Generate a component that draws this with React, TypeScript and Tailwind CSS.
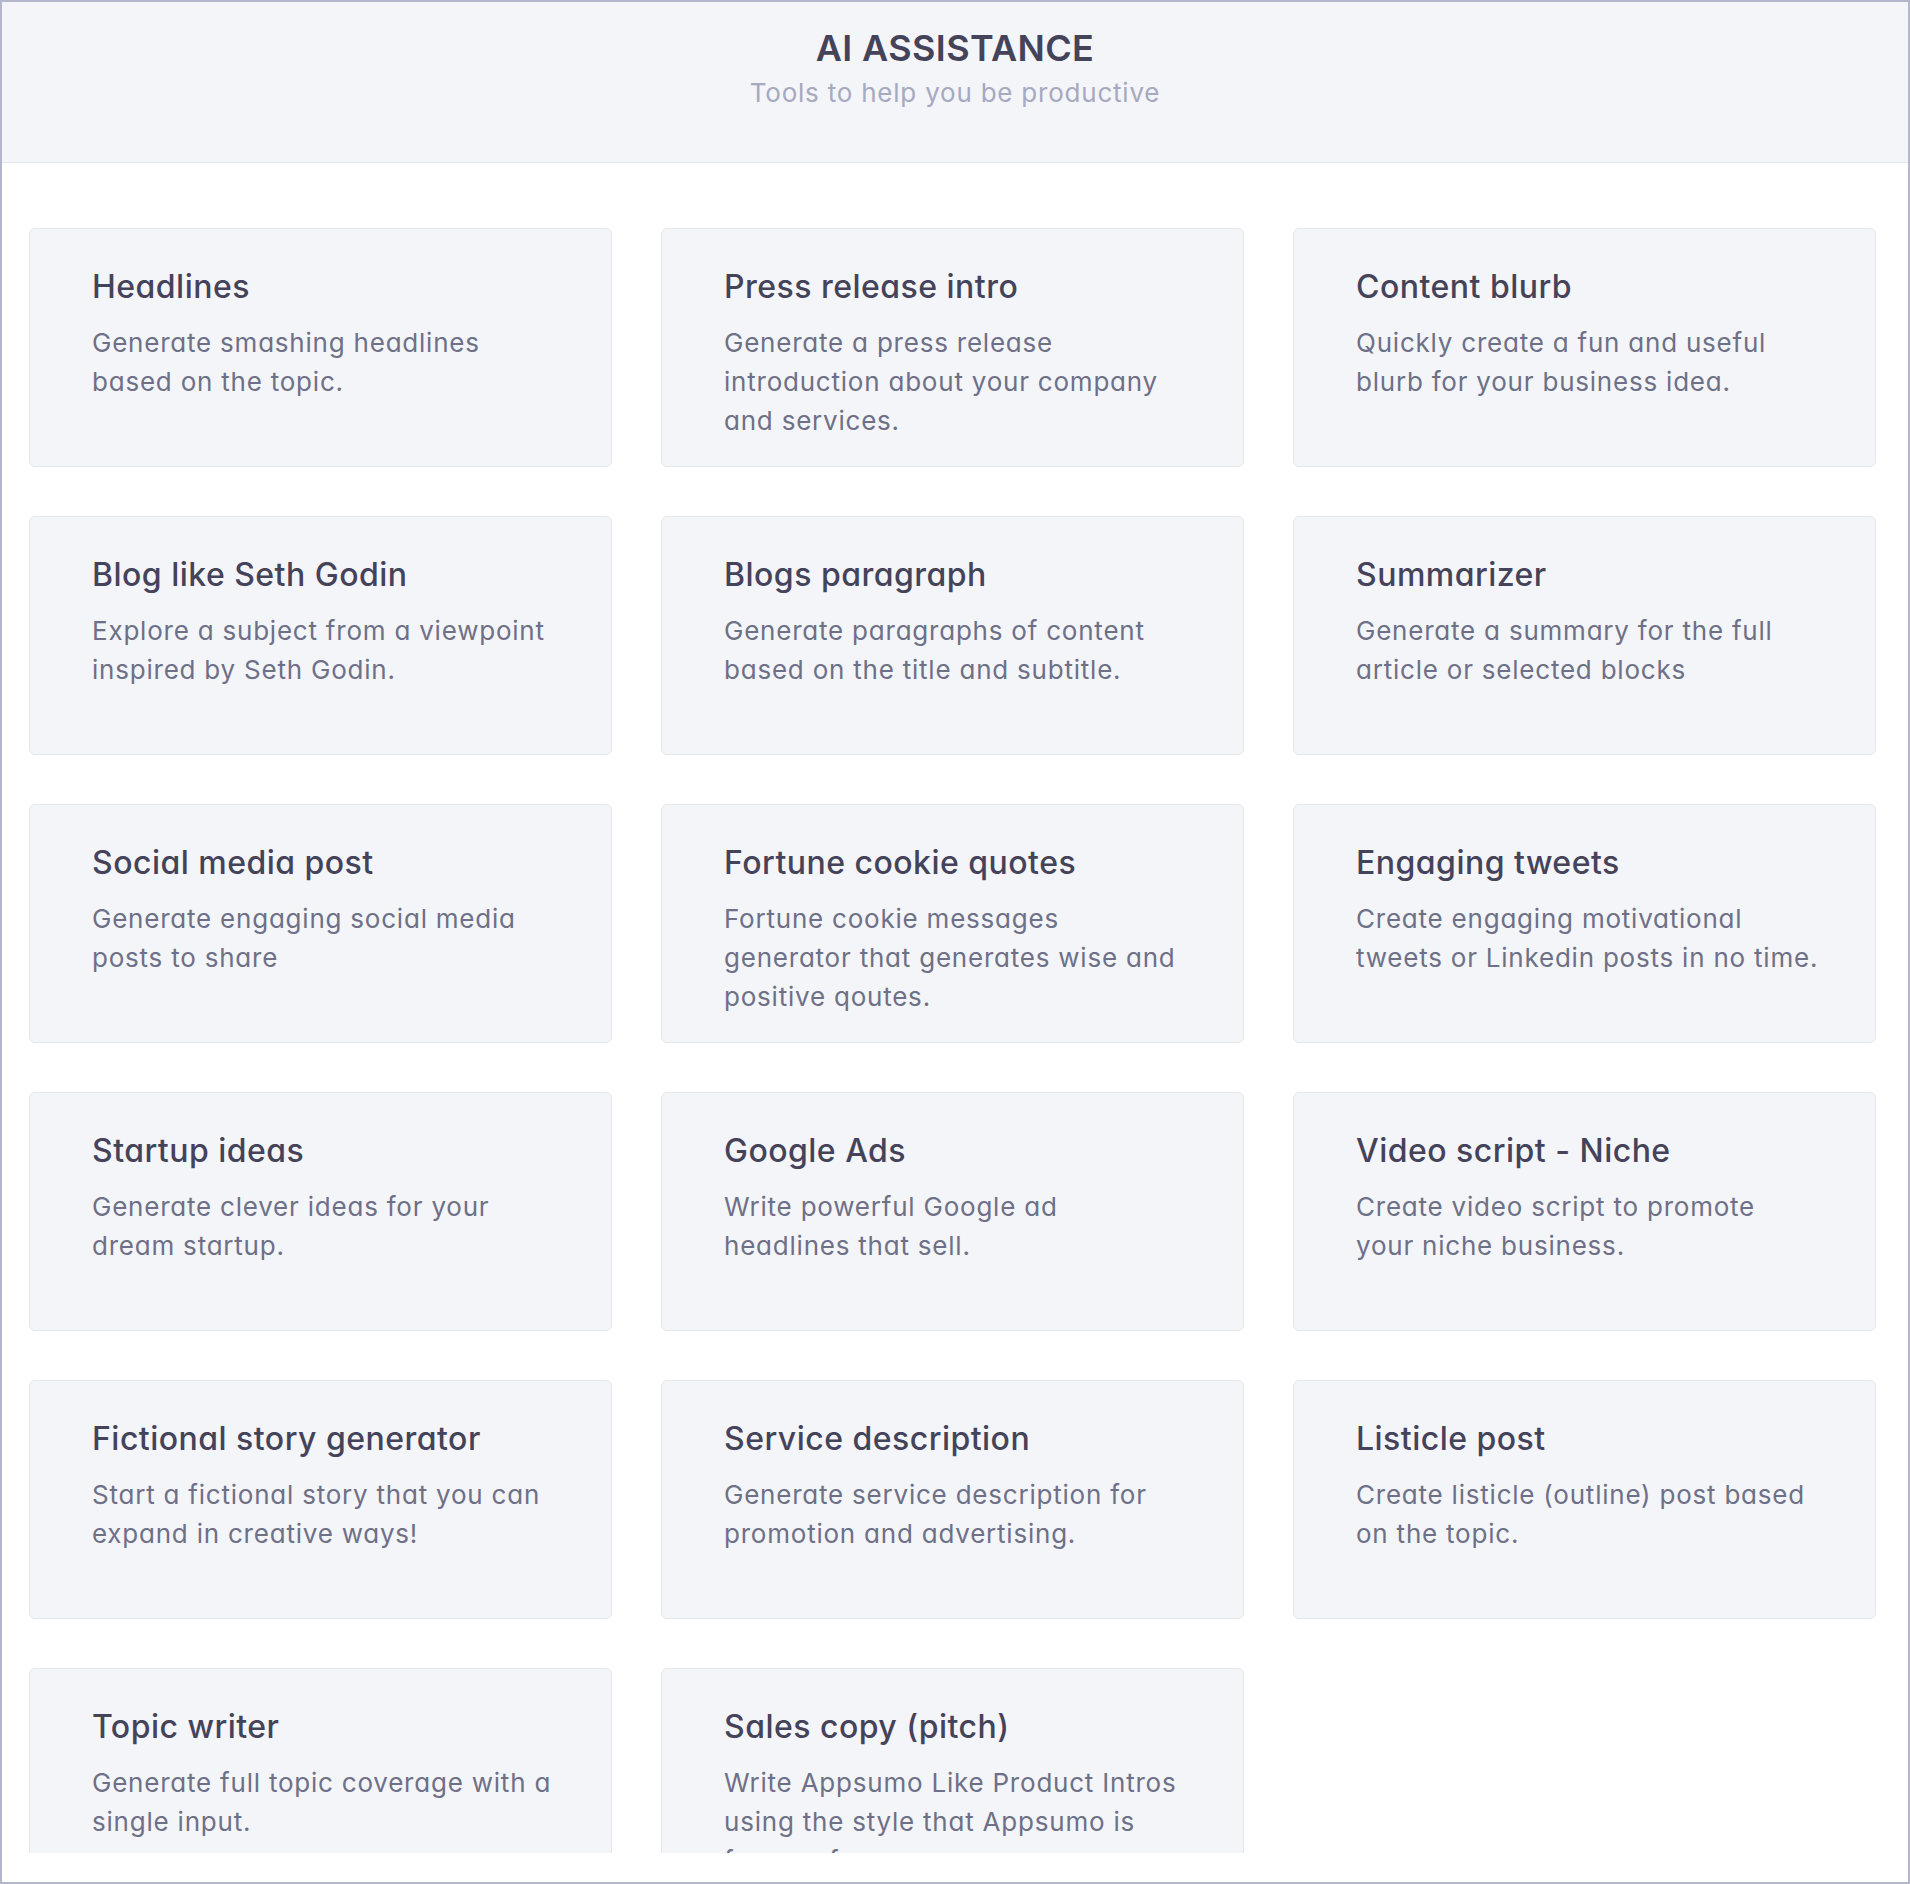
const tools = [
  { title: 'Headlines', lines: ['Generate smashing headlines', 'based on the topic.'] },
  { title: 'Press release intro', lines: ['Generate a press release', 'introduction about your company', 'and services.'] },
  { title: 'Content blurb', lines: ['Quickly create a fun and useful', 'blurb for your business idea.'] },
  { title: 'Blog like Seth Godin', lines: ['Explore a subject from a viewpoint', 'inspired by Seth Godin.'] },
  { title: 'Blogs paragraph', lines: ['Generate paragraphs of content', 'based on the title and subtitle.'] },
  { title: 'Summarizer', lines: ['Generate a summary for the full', 'article or selected blocks'] },
  { title: 'Social media post', lines: ['Generate engaging social media', 'posts to share'] },
  { title: 'Fortune cookie quotes', lines: ['Fortune cookie messages', 'generator that generates wise and', 'positive qoutes.'] },
  { title: 'Engaging tweets', lines: ['Create engaging motivational', 'tweets or Linkedin posts in no time.'] },
  { title: 'Startup ideas', lines: ['Generate clever ideas for your', 'dream startup.'] },
  { title: 'Google Ads', lines: ['Write powerful Google ad', 'headlines that sell.'] },
  { title: 'Video script - Niche', lines: ['Create video script to promote', 'your niche business.'] },
  { title: 'Fictional story generator', lines: ['Start a fictional story that you can', 'expand in creative ways!'] },
  { title: 'Service description', lines: ['Generate service description for', 'promotion and advertising.'] },
  { title: 'Listicle post', lines: ['Create listicle (outline) post based', 'on the topic.'] },
  { title: 'Topic writer', lines: ['Generate full topic coverage with a', 'single input.'] },
  { title: 'Sales copy (pitch)', lines: ['Write Appsumo Like Product Intros', 'using the style that Appsumo is', 'famous for.'] },
];

function ToolCard({ title, lines }: { title: string; lines: string[] }) {
  return (
    <div className="h-[239px] rounded-md border-[1.5px] border-[#e5e6ec] bg-[#f4f5f8] pl-[62px] pr-[30px] pt-[36px]">
      <h3 className="text-[32px] leading-[44px] font-medium tracking-[0.015em] text-[#44435a]">{title}</h3>
      <p className="mt-[14px] text-[26px] leading-[39px] tracking-[0.03em] text-[#6d7087]">
        {lines.map((l) => (
          <span key={l} className="block whitespace-nowrap">{l}</span>
        ))}
      </p>
    </div>
  );
}

export default function App() {
  return (
    <div className="flex h-[1884px] w-[1910px] flex-col overflow-hidden border-2 border-[#b4b7cc] bg-white font-['Inter',sans-serif] [font-feature-settings:'cv11']">
      <header className="flex h-[161px] shrink-0 flex-col items-center border-b border-[#e6e7ec] bg-[#f4f5f8] pt-[23px]">
        <h1 className="text-[36px] leading-[46px] font-semibold tracking-[0.01em] text-[#44435a]">AI ASSISTANCE</h1>
        <p className="mt-[4px] text-[26px] leading-[36px] tracking-[0.03em] text-[#a6a9bf]">Tools to help you be productive</p>
      </header>
      <div className="min-h-0 flex-1 pb-[29px] pl-[27px] pr-[32px] pt-[27px]">
        <div className="h-full overflow-hidden pt-[38px]">
          <div className="grid grid-cols-3 gap-x-[49px] gap-y-[49px]">
            {tools.map((t) => (
              <ToolCard key={t.title} title={t.title} lines={t.lines} />
            ))}
          </div>
        </div>
      </div>
    </div>
  );
}
